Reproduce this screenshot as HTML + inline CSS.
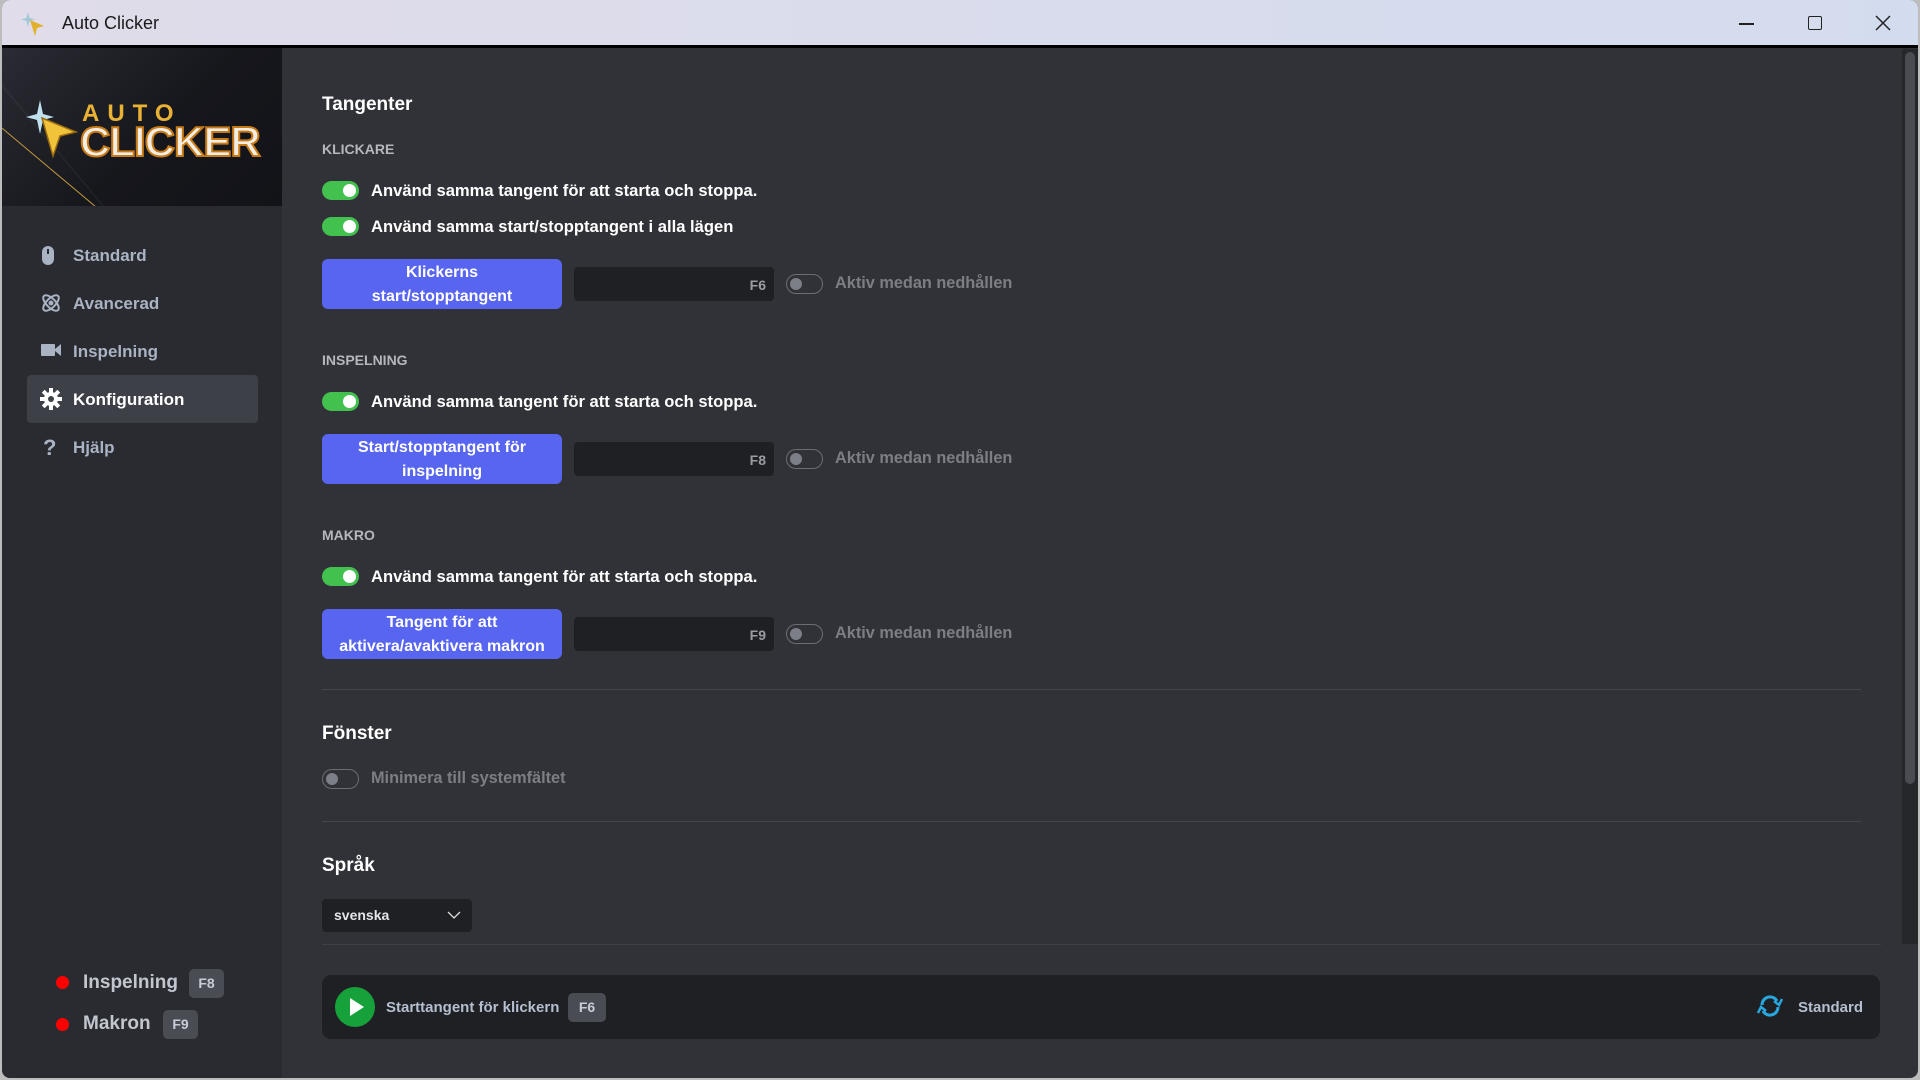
<!DOCTYPE html>
<html><head><meta charset="utf-8"><style>
*{box-sizing:border-box;margin:0;padding:0}
body{width:1920px;height:1080px;overflow:hidden;background:#bdbdbd;font-family:"Liberation Sans",sans-serif;position:relative}
.win{position:absolute;left:2px;top:0;width:1916px;height:1078px;border-radius:8px;overflow:hidden;background:#313238}
.title{position:absolute;left:0;top:0;width:100%;height:48px;background:linear-gradient(90deg,#e0dcea,#d3dcee);border-bottom:3px solid #000}
.title span{position:absolute;left:60px;top:13px;font-size:18px;color:#1a1a1a}
.side{position:absolute;left:0;top:48px;width:280px;height:1030px;background:#2a2b30}
.logo{position:absolute;left:0;top:0;width:280px;height:158px;background:linear-gradient(135deg,#2a2b33 0%,#16171c 55%,#121318 100%);overflow:hidden}
.abs{position:absolute}
.nav{position:absolute;left:71px;font-size:17px;font-weight:bold;color:#a9b3c4}
.ico{position:absolute;left:38px}
.t{position:absolute;font-weight:bold;color:#fff}
.lab{position:absolute;left:320px;font-size:14px;font-weight:bold;color:#b5b7bd}
.row{position:absolute;left:320px;font-size:16.6px;font-weight:bold;color:#fff}
.tg{position:absolute;left:320px;width:37px;height:19px;border-radius:10px;background:#43c14e}
.tg::after{content:"";position:absolute;right:3px;top:3px;width:13px;height:13px;border-radius:50%;background:#fff}
.tgo{position:absolute;width:37px;height:20px;border-radius:10px;border:1.5px solid #6b6d75}
.tgo::after{content:"";position:absolute;left:3px;top:2.5px;width:12px;height:12px;border-radius:50%;background:#7d7f88}
.btn{position:absolute;left:320px;width:240px;height:50px;border-radius:6px;background:#5865f0;color:#fff;font-weight:bold;font-size:16px;text-align:center;line-height:24px;padding-top:2px}
.inp{position:absolute;left:572px;width:200px;height:34px;border-radius:4px;background:#1f2024;color:#9a9ca3;font-size:14px;font-weight:bold;text-align:right;padding:10px 8px 0 0}
.ak{position:absolute;left:833px;font-size:16.3px;font-weight:bold;color:#7c7e86}
.sep{position:absolute;left:320px;width:1539px;height:1px;background:#45464d}
.kbd{position:absolute;background:#4a4c54;color:#c9ccd3;border-radius:5px;font-weight:bold;font-size:14px;text-align:center}
</style></head><body>
<div class="win">
<div class="title">
<svg class="abs" style="left:18px;top:10px" width="30" height="30" viewBox="0 0 30 30"><path d="M8 2 L9.5 8 L15 9.5 L9.5 11 L8 17 L6.5 11 L1 9.5 L6.5 8Z" fill="#9fc7d8"/><path d="M10 10 L24 16 L17 18 L15 26Z" fill="#e2b02a"/></svg>
<span>Auto Clicker</span>
<div class="abs" style="left:1737px;top:23px;width:15px;height:1.5px;background:#222"></div>
<div class="abs" style="left:1806px;top:16px;width:14px;height:14px;border:1.5px solid #222;border-radius:2px"></div>
<svg class="abs" style="left:1873px;top:15px" width="16" height="16"><path d="M1 1L15 15M15 1L1 15" stroke="#222" stroke-width="1.5"/></svg>
</div>
<div class="side">
<div class="logo">
<div class="abs" style="left:-40px;top:130px;width:200px;height:1px;background:#c59a3a;transform:rotate(40deg)"></div>
<div class="abs" style="left:60px;top:-40px;width:2px;height:300px;background:rgba(255,255,255,.04);transform:rotate(-40deg)"></div>
<svg class="abs" style="left:22px;top:52px" width="60" height="60" viewBox="0 0 60 60"><path d="M16 0 L19 14 L30 17 L19 20 L16 34 L13 20 L2 17 L13 14Z" fill="#bfe0ee"/><path d="M18 18 L52 32 L36 36 L29 56Z" fill="#f0c33a" stroke="#9a6a10" stroke-width="1.5"/></svg>
<div class="t" style="left:80px;top:52px;font-size:24px;letter-spacing:8px;color:#e9b235;font-weight:900">AUTO</div>
<div class="t" style="left:78px;top:70px;font-size:42px;letter-spacing:-1px;color:#f2eee6;-webkit-text-stroke:2px #c77a16;font-weight:900">CLICKER</div>
</div>
<svg class="ico" style="top:197px" width="16" height="22"><rect x="2" y="1" width="12" height="19" rx="6" fill="#a9b3c4"/><rect x="7" y="4" width="2" height="5" fill="#2a2b30"/></svg>
<div class="nav" style="top:198px">Standard</div>
<svg class="ico" style="top:244px" width="22" height="22" viewBox="0 0 22 22" fill="none" stroke="#a9b3c4" stroke-width="2"><ellipse cx="11" cy="11" rx="10" ry="4.5" transform="rotate(45 11 11)"/><ellipse cx="11" cy="11" rx="10" ry="4.5" transform="rotate(-45 11 11)"/><circle cx="11" cy="11" r="1.5" fill="#a9b3c4"/></svg>
<div class="nav" style="top:246px">Avancerad</div>
<svg class="ico" style="top:294px" width="22" height="16"><rect x="1" y="2" width="14" height="12" rx="1" fill="#a9b3c4"/><path d="M15 7L21 2V14L15 9Z" fill="#a9b3c4"/></svg>
<div class="nav" style="top:294px">Inspelning</div>
<div class="abs" style="left:25px;top:327px;width:231px;height:48px;border-radius:4px;background:#3e4048"></div>
<svg class="ico" style="top:340px" width="22" height="22" viewBox="0 0 22 22"><g fill="#fff"><circle cx="11" cy="11" r="7"/><rect x="9" y="0" width="4" height="22"/><rect x="9" y="0" width="4" height="22" transform="rotate(45 11 11)"/><rect x="9" y="0" width="4" height="22" transform="rotate(90 11 11)"/><rect x="9" y="0" width="4" height="22" transform="rotate(135 11 11)"/></g><circle cx="11" cy="11" r="3" fill="#3e4048"/></svg>
<div class="nav" style="top:342px;color:#fff">Konfiguration</div>
<div class="ico" style="top:387px;font-size:22px;font-weight:bold;color:#a9b3c4;left:41px">?</div>
<div class="nav" style="top:390px">Hjälp</div>
<div class="abs" style="left:54px;top:928px;width:13px;height:13px;border-radius:50%;background:#f00"></div>
<div class="t" style="left:81px;top:924px;font-size:19px;color:#c2c6cf">Inspelning</div>
<div class="kbd" style="left:187px;top:921px;width:35px;height:29px;line-height:29px">F8</div>
<div class="abs" style="left:54px;top:970px;width:13px;height:13px;border-radius:50%;background:#f00"></div>
<div class="t" style="left:81px;top:965px;font-size:19px;color:#c2c6cf">Makron</div>
<div class="kbd" style="left:161px;top:962px;width:35px;height:29px;line-height:29px">F9</div>
</div>
<!-- content -->
<div class="t" style="left:320px;top:94px;font-size:19px">Tangenter</div>
<div class="lab" style="top:141px">KLICKARE</div>
<div class="tg" style="top:181px"></div><div class="row" style="top:181px;left:369px">Använd samma tangent för att starta och stoppa.</div>
<div class="tg" style="top:217px"></div><div class="row" style="top:217px;left:369px">Använd samma start/stopptangent i alla lägen</div>
<div class="btn" style="top:259px">Klickerns<br>start/stopptangent</div>
<div class="inp" style="top:267px">F6</div>
<div class="tgo" style="left:784px;top:274px"></div><div class="ak" style="top:274px">Aktiv medan nedhållen</div>
<div class="lab" style="top:352px">INSPELNING</div>
<div class="tg" style="top:392px"></div><div class="row" style="top:392px;left:369px">Använd samma tangent för att starta och stoppa.</div>
<div class="btn" style="top:434px">Start/stopptangent för<br>inspelning</div>
<div class="inp" style="top:442px">F8</div>
<div class="tgo" style="left:784px;top:449px"></div><div class="ak" style="top:449px">Aktiv medan nedhållen</div>
<div class="lab" style="top:527px">MAKRO</div>
<div class="tg" style="top:567px"></div><div class="row" style="top:567px;left:369px">Använd samma tangent för att starta och stoppa.</div>
<div class="btn" style="top:609px">Tangent för att<br>aktivera/avaktivera makron</div>
<div class="inp" style="top:617px">F9</div>
<div class="tgo" style="left:784px;top:624px"></div><div class="ak" style="top:624px">Aktiv medan nedhållen</div>
<div class="sep" style="top:689px"></div>
<div class="t" style="left:320px;top:723px;font-size:19px">Fönster</div>
<div class="tgo" style="left:320px;top:769px"></div><div class="ak" style="top:769px;left:369px">Minimera till systemfältet</div>
<div class="sep" style="top:821px"></div>
<div class="t" style="left:320px;top:855px;font-size:19px">Språk</div>
<div class="abs" style="left:320px;top:899px;width:150px;height:33px;border-radius:4px;background:#1f2024"></div>
<div class="t" style="left:332px;top:907px;font-size:14px;color:#e4e5e8">svenska</div>
<svg class="abs" style="left:445px;top:911px" width="14" height="9"><path d="M1 1L7 7L13 1" stroke="#ddd" stroke-width="1.3" fill="none"/></svg>
<div class="sep" style="top:944px;width:1559px;background:#3f4047"></div>
<div class="abs" style="left:320px;top:975px;width:1558px;height:64px;border-radius:9px;background:#1f2024"></div>
<div class="abs" style="left:333px;top:987px;width:40px;height:40px;border-radius:50%;background:#17a13b"></div>
<svg class="abs" style="left:347px;top:997px" width="16" height="20"><path d="M1 1L15 10L1 19Z" fill="#fff"/></svg>
<div class="t" style="left:384px;top:999px;font-size:15px;color:#b5bfd0">Starttangent för klickern</div>
<div class="kbd" style="left:566px;top:993px;width:38px;height:29px;line-height:29px">F6</div>
<svg class="abs" style="left:1753px;top:995px" width="30" height="22" viewBox="0 0 30 22" fill="none" stroke="#29a8e0" stroke-width="3"><path d="M7 10A8 8 0 0 1 22 6"/><path d="M23 12A8 8 0 0 1 8 16"/><path d="M19 6L24 10L27 4" stroke-width="2.5"/><path d="M11 16L6 12L3 18" stroke-width="2.5"/></svg>
<div class="t" style="left:1796px;top:999px;font-size:15px;color:#b5bfd0">Standard</div>
<div class="abs" style="left:1900px;top:49px;width:16px;height:895px;background:#26272b"></div>
<div class="abs" style="left:1903px;top:52px;width:10px;height:732px;border-radius:5px;background:#4b4c52"></div>
</div>
</body></html>
